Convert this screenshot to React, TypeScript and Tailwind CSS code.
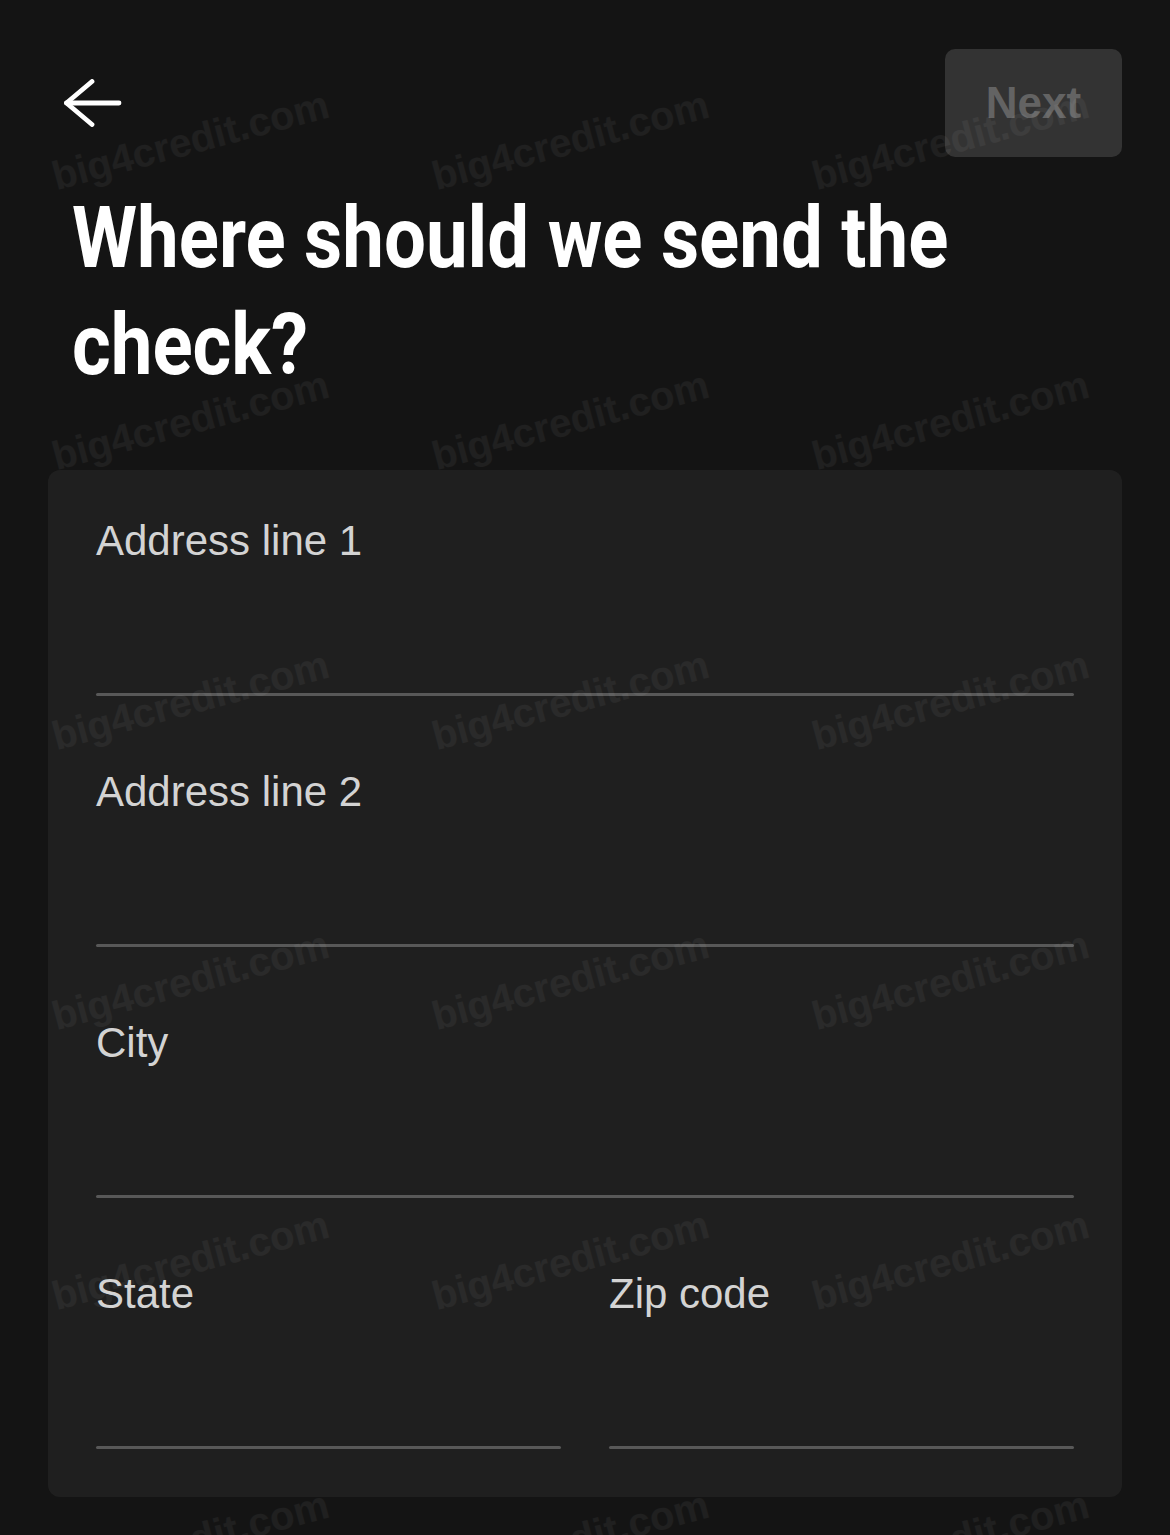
import React from "react"

const fields = ["Address line 1", "Address line 2", "City"]

function Field({ label }: { label: string }) {
  return (
    <div className="flex flex-col">
      <span className="text-[42px] leading-[50px] text-[#d3d3d3] font-['Liberation_Sans',sans-serif]">{label}</span>
      <div className="mt-[127px] h-[3px] rounded-full bg-[#585858]" />
    </div>
  )
}

function Watermark() {
  const cells = Array.from({ length: 18 })
  return (
    <div className="pointer-events-none absolute inset-0 overflow-hidden">
      <div className="grid grid-cols-[repeat(3,380px)] auto-rows-[280px]">
        {cells.map((_, i) => (
          <div key={i} className="flex items-center justify-center">
            <span className="rotate-[-15deg] whitespace-nowrap font-['Liberation_Sans',sans-serif] text-[40px] font-bold text-white/[0.05]">
              big4credit.com
            </span>
          </div>
        ))}
      </div>
    </div>
  )
}

export default function App() {
  return (
    <div className="relative min-h-[1535px] w-full overflow-hidden bg-[#141414]">
      <div className="flex items-center justify-between pl-[64px] pr-[48px] pt-[49px]">
        <svg width="58" height="48" viewBox="0 0 58 48" fill="none" stroke="white" strokeWidth="4.8" strokeLinecap="round" strokeLinejoin="round">
          <path d="M55 24H2.5" />
          <path d="M28 2.5L2.5 24L28 45.5" />
        </svg>
        <button className="flex h-[108px] w-[177px] items-center justify-center rounded-[10px] bg-[#333333] font-['Liberation_Sans',sans-serif] text-[44px] font-bold text-[#636363]">
          Next
        </button>
      </div>

      <h1 className="mt-[28px] pl-[72px] font-['Roboto',sans-serif] text-[85px] font-bold leading-[107px] text-white">
        <span className="inline-block origin-left scale-x-[0.875] whitespace-nowrap">
          Where should we send the
          <br />
          check?
        </span>
      </h1>

      <div className="mx-[48px] mt-[71px] flex flex-col gap-[71px] rounded-[12px] bg-[#1f1f1f] px-[48px] pb-[48px] pt-[46px]">
        {fields.map((f) => (
          <Field key={f} label={f} />
        ))}
        <div className="grid grid-cols-2 gap-[48px]">
          <Field label="State" />
          <Field label="Zip code" />
        </div>
      </div>

      <Watermark />
    </div>
  )
}
